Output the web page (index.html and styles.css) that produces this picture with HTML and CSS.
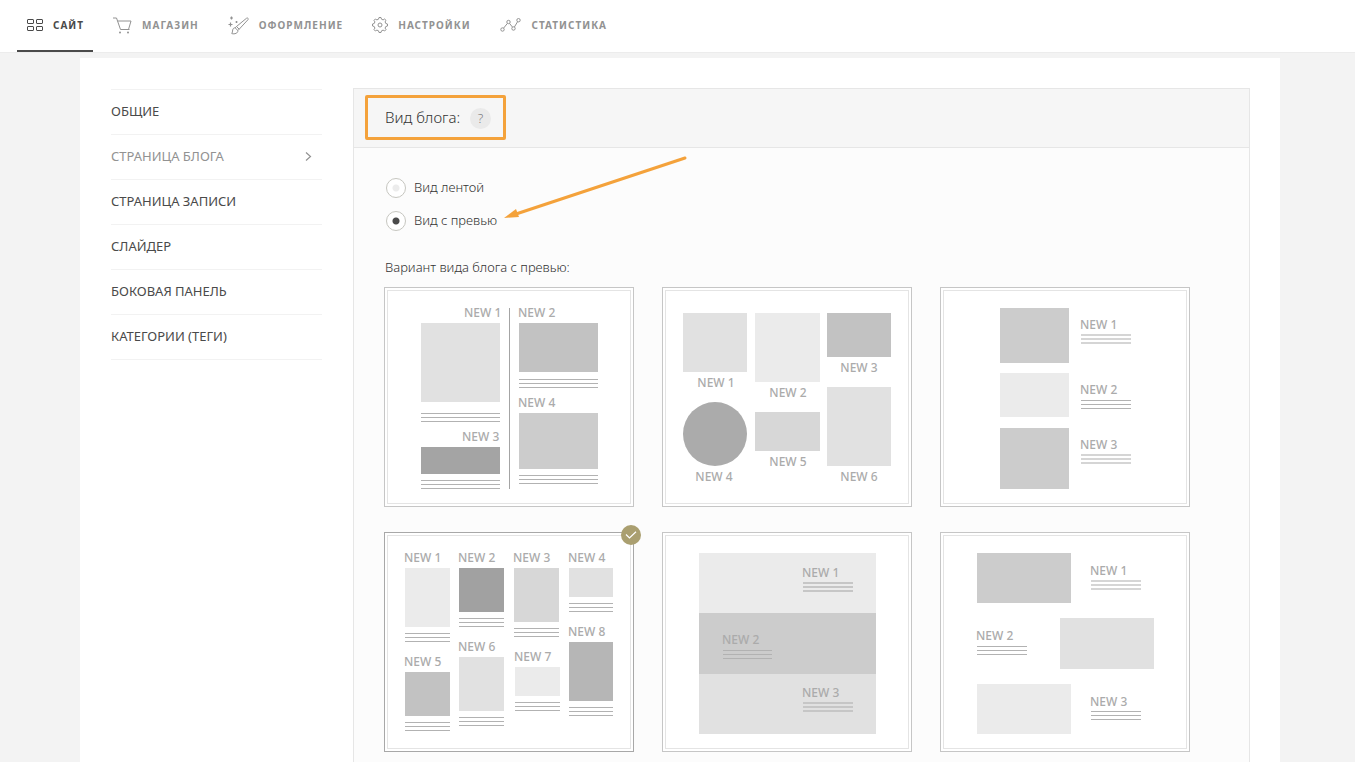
FILE: index.html
```html
<!DOCTYPE html>
<html lang="ru">
<head>
    <meta charset="UTF-8">
    <meta name="viewport" content="width=device-width, initial-scale=1.0">
    <title>Страница блога</title>
    <link rel="stylesheet" href="styles.css">
</head>
<body>
    <!-- top menu -->
    <nav class="navbar">
        <a href="#" class="active">
            <svg width="16" height="12" viewBox="0 0 16 12" fill="none" stroke="currentColor"><rect x="0.5" y="0.5" width="6" height="4" rx="0.5"/><rect x="9.5" y="0.5" width="6" height="4" rx="0.5"/><rect x="0.5" y="7.5" width="6" height="4" rx="0.5"/><rect x="9.5" y="7.5" width="6" height="4" rx="0.5"/></svg>
            Сайт
        </a>
        <a href="#">
            <svg width="19" height="17" viewBox="0 0 19 17" fill="none" stroke="currentColor"><path d="M0 1h3.500l4 11.500h9M4.500 4h13.500l-2.500 8.500"/><circle cx="7" cy="15.500" r="1" fill="currentColor" stroke="none"/><circle cx="15" cy="15.500" r="1" fill="currentColor" stroke="none"/></svg>
            Магазин
        </a>
        <a href="#">
            <svg width="21" height="19" viewBox="0 0 21 19" fill="none" stroke="currentColor"><path d="M20 2.300c-.6-.6-1.300-.2-1.800.2L8.500 10.500l2.700 2.700L19.700 4c.5-.5.800-1.200.3-1.700zM8.500 10.500l-1.400 1.300 2.800 2.700 1.300-1.300M7.100 11.800c-1.300 0-2.200.8-2.400 2.200-.2 1.400-.3 2.600-.9 3.600 2.700.8 6.400-.4 6.100-3.100"/><path d="M3.500.5v3M2 2h3M2.500 6.500v4M.5 8.500h4M8.500 5v2M7.500 6h2" stroke-width="1.200"/></svg>
            Оформление
        </a>
        <a href="#">
            <svg width="16" height="16" viewBox="0 0 16 16" fill="none" stroke="currentColor" stroke-linejoin="round"><path d="M7 .5L9 .5 9.500 2.200 11.100 2.900 12.600 2 14 3.400 13.100 4.900 13.800 6.500 15.500 7 15.500 9 13.800 9.500 13.100 11.100 14 12.600 12.600 14 11.100 13.100 9.500 13.800 9 15.500 7 15.500 6.500 13.800 4.900 13.100 3.400 14 2 12.600 2.900 11.100 2.200 9.500 .5 9 .5 7 2.200 6.500 2.900 4.900 2 3.400 3.400 2 4.900 2.900 6.500 2.200z"/><circle cx="8" cy="8" r="2"/></svg>
            Настройки
        </a>
        <a href="#">
            <svg width="22" height="14" viewBox="0 0 22 14" fill="none" stroke="currentColor"><circle cx="2.500" cy="11.500" r="1.700"/><circle cx="8.500" cy="4" r="1.700"/><circle cx="13.500" cy="10.500" r="1.700"/><circle cx="18.500" cy="2.200" r="1.700"/><path d="M3.600 10.100l3.800-4.700M9.500 5.400l3 3.700M14.400 9l3.200-5.300"/></svg>
            Статистика
        </a>
    </nav>

    <div class="container">
        <!-- side menu -->
        <ul class="sidebar">
            <li><a href="#">Общие</a></li>
            <li><a href="#" class="current">Страница блога
                <svg width="7" height="9" viewBox="0 0 7 9" fill="none" stroke="currentColor" stroke-width="1.200"><path d="M1 .5l4.500 4L1 8.500"/></svg>
            </a></li>
            <li><a href="#">Страница записи</a></li>
            <li><a href="#">Слайдер</a></li>
            <li><a href="#">Боковая панель</a></li>
            <li><a href="#">Категории (теги)</a></li>
        </ul>

        <form class="panel">
            <div class="panel-header">
                <div class="panel-title">
                    <h2>Вид блога:</h2>
                    <button type="button" class="help">?</button>
                    <span class="highlight"></span>
                </div>
            </div>

            <div class="panel-body">
                <label class="radio"><input type="radio" name="view" value="feed"><span>Вид лентой</span></label>
                <label class="radio"><input type="radio" name="view" value="preview" checked><span>Вид с превью</span>
                    <svg class="arrow" width="184" height="66" viewBox="0 0 184 66"><path d="M181 3L12 59" stroke="#f4a23b" stroke-width="3" stroke-linecap="round"/><path d="M0 63l12-9 3 8z" fill="#f4a23b"/></svg>
                </label>

                <p class="caption">Вариант вида блога с превью:</p>

                <div class="thumbs">
                    <label class="thumb">
                        <input type="radio" name="variant" value="1" aria-label="Вариант 1">
                        <svg viewBox="4 4 242 212">
                            <text x="80" y="30">NEW 1</text>
                            <rect x="37" y="36" width="79" height="79" fill="#e1e1e1"/>
                            <path class="lines" d="M37 126.500h79M37 130.500h79M37 134.500h79"/>
                            <text x="78" y="154">NEW 3</text>
                            <rect x="37" y="160" width="79" height="27" fill="#a4a4a4"/>
                            <path class="lines" d="M37 193.500h79M37 197.500h79M37 201.500h79"/>
                            <path d="M125.500 21v181" stroke="#a4a4a4"/>
                            <text x="134" y="30">NEW 2</text>
                            <rect x="135" y="36" width="79" height="49" fill="#c2c2c2"/>
                            <path class="lines" d="M135 92.500h79M135 96.500h79M135 100.500h79"/>
                            <text x="134" y="120">NEW 4</text>
                            <rect x="135" y="126" width="79" height="56" fill="#ccc"/>
                            <path class="lines" d="M135 188.500h79M135 192.500h79M135 196.500h79"/>
                        </svg>
                    </label>

                    <label class="thumb">
                        <input type="radio" name="variant" value="2" aria-label="Вариант 2">
                        <svg viewBox="4 4 242 212" text-anchor="middle">
                            <rect x="21" y="26" width="64" height="59" fill="#e1e1e1"/>
                            <text x="54" y="100">NEW 1</text>
                            <rect x="93" y="26" width="65" height="69" fill="#ebebeb"/>
                            <text x="126" y="110">NEW 2</text>
                            <rect x="165" y="26" width="64" height="44" fill="#c2c2c2"/>
                            <text x="197" y="85">NEW 3</text>
                            <circle cx="53" cy="147" r="32" fill="#ababab"/>
                            <text x="52" y="194">NEW 4</text>
                            <rect x="93" y="125" width="65" height="39" fill="#d7d7d7"/>
                            <text x="126" y="179">NEW 5</text>
                            <rect x="165" y="100" width="64" height="79" fill="#e1e1e1"/>
                            <text x="197" y="194">NEW 6</text>
                        </svg>
                    </label>

                    <label class="thumb">
                        <input type="radio" name="variant" value="3" aria-label="Вариант 3">
                        <svg viewBox="4 4 242 212">
                            <rect x="60" y="21" width="69" height="55" fill="#ccc"/>
                            <text x="140" y="42">NEW 1</text>
                            <path class="lines wide" d="M141 48h50M141 52h50M141 56h50"/>
                            <rect x="60" y="86" width="69" height="44" fill="#ebebeb"/>
                            <text x="140" y="107">NEW 2</text>
                            <path class="lines" d="M141 113.500h50M141 117.500h50M141 121.500h50"/>
                            <rect x="60" y="141" width="69" height="61" fill="#ccc"/>
                            <text x="140" y="162">NEW 3</text>
                            <path class="lines wide" d="M141 168h50M141 172h50M141 176h50"/>
                        </svg>
                    </label>

                    <label class="thumb">
                        <input type="radio" name="variant" value="4" aria-label="Вариант 4" checked>
                        <svg viewBox="4 4 242 212">
                            <text x="20" y="30">NEW 1</text>
                            <rect x="21" y="36" width="45" height="59" fill="#ebebeb"/>
                            <path class="lines" d="M21 101.500h45M21 105.500h45M21 109.500h45"/>
                            <text x="20" y="134">NEW 5</text>
                            <rect x="21" y="140" width="45" height="44" fill="#c2c2c2"/>
                            <path class="lines" d="M21 190.500h45M21 194.500h45M21 198.500h45"/>
                            <text x="74" y="30">NEW 2</text>
                            <rect x="75" y="36" width="45" height="44" fill="#a1a1a1"/>
                            <path class="lines" d="M75 86.500h45M75 90.500h45M75 94.500h45"/>
                            <text x="74" y="119">NEW 6</text>
                            <rect x="75" y="125" width="45" height="54" fill="#e1e1e1"/>
                            <path class="lines" d="M75 185.500h45M75 189.500h45M75 193.500h45"/>
                            <text x="129" y="30">NEW 3</text>
                            <rect x="130" y="36" width="45" height="54" fill="#d7d7d7"/>
                            <path class="lines" d="M130 96.500h45M130 100.500h45M130 104.500h45"/>
                            <text x="130" y="129">NEW 7</text>
                            <rect x="131" y="135" width="45" height="29" fill="#ebebeb"/>
                            <path class="lines" d="M131 170.500h45M131 174.500h45M131 178.500h45"/>
                            <text x="184" y="30">NEW 4</text>
                            <rect x="185" y="36" width="44" height="29" fill="#e1e1e1"/>
                            <path class="lines" d="M185 71.500h44M185 75.500h44M185 79.500h44"/>
                            <text x="184" y="104">NEW 8</text>
                            <rect x="185" y="110" width="44" height="59" fill="#b6b6b6"/>
                            <path class="lines" d="M185 175.500h44M185 179.500h44M185 183.500h44"/>
                        </svg>
                        <span class="check">
                            <svg width="12" height="8" viewBox="0 0 12 8" fill="none" stroke="#fff" stroke-width="1.200"><path d="M1 3.500l3.500 3.500L11 .8"/></svg>
                        </span>
                    </label>

                    <label class="thumb">
                        <input type="radio" name="variant" value="5" aria-label="Вариант 5">
                        <svg viewBox="4 4 242 212">
                            <rect x="37" y="21" width="177" height="60" fill="#ebebeb"/>
                            <rect x="37" y="81" width="177" height="61" fill="#ccc"/>
                            <rect x="37" y="142" width="177" height="60" fill="#e1e1e1"/>
                            <text x="140" y="45">NEW 1</text>
                            <path class="lines wide dark" d="M141 51h50M141 55h50M141 59h50"/>
                            <text x="60" y="112">NEW 2</text>
                            <path class="lines" d="M61 118.500h49M61 122.500h49M61 126.500h49"/>
                            <text x="140" y="165">NEW 3</text>
                            <path class="lines wide dark" d="M141 171h50M141 175h50M141 179h50"/>
                        </svg>
                    </label>

                    <label class="thumb">
                        <input type="radio" name="variant" value="6" aria-label="Вариант 6">
                        <svg viewBox="4 4 242 212">
                            <rect x="37" y="21" width="94" height="50" fill="#ccc"/>
                            <text x="150" y="43">NEW 1</text>
                            <path class="lines wide" d="M151 49h50M151 53h50M151 57h50"/>
                            <rect x="120" y="86" width="94" height="51" fill="#e1e1e1"/>
                            <text x="36" y="108">NEW 2</text>
                            <path class="lines" d="M37 114.500h50M37 118.500h50M37 122.500h50"/>
                            <rect x="37" y="152" width="94" height="50" fill="#ebebeb"/>
                            <text x="150" y="174">NEW 3</text>
                            <path class="lines" d="M151 179.500h50M151 183.500h50M151 187.500h50"/>
                        </svg>
                    </label>
                </div>
            </div>
        </form>
    </div>
</body>
</html>
```
FILE: styles.css
```css
* {
    box-sizing: border-box;
}
body {
    font-family: "Noto Sans", "Open Sans", sans-serif;
    font-size: 13px;
    font-weight: 300;
    color: #333;
    background: #f3f3f3;
    margin: 0;
    min-height: 100vh;
    display: flex;
    flex-direction: column;
}

/* top menu */
.navbar {
    display: flex;
    gap: 10px;
    padding: 0 17px;
    background: white;
    border-bottom: 1px solid #ececec;
}
.navbar a {
    display: flex;
    align-items: center;
    gap: 10px;
    height: 52px;
    padding: 0 9px 0 10px;
    border-bottom: 2px solid transparent;
    color: #929292;
    font-size: 10px;
    font-weight: bold;
    letter-spacing: 1px;
    text-transform: uppercase;
    text-decoration: none;
}
.navbar a.active {
    color: #4a4a4a;
    border-color: #4a4a4a;
}

.container {
    flex: 1;
    display: flex;
    gap: 31px;
    margin: 5px 75px 0 80px;
    padding: 30px 30px 0 31px;
    background: white;
}

/* side menu */
.sidebar {
    flex: 0 0 211px;
    list-style: none;
    margin: 1px 0 0;
    padding: 0;
}
.sidebar li {
    border-top: 1px solid #f2f2f2;
}
.sidebar li:last-child {
    border-bottom: 1px solid #f2f2f2;
}
.sidebar a {
    display: flex;
    align-items: center;
    justify-content: space-between;
    height: 44px;
    padding: 0 10px 2px 0;
    color: #4a4a4a;
    font-weight: 400;
    text-transform: uppercase;
    text-decoration: none;
}
.sidebar a.current {
    color: #929292;
}

/* settings */
.panel {
    flex: 1;
    border: 1px solid #e6e6e6;
    border-bottom: none;
    background: #fcfcfc;
}
.panel-header {
    display: flex;
    align-items: center;
    height: 59px;
    padding: 0 31px;
    background: #f6f6f6;
    border-bottom: 1px solid #e6e6e6;
}
.panel-title {
    position: relative;
    display: flex;
    align-items: center;
    gap: 10px;
}
.panel-title h2 {
    margin: 0;
    padding-bottom: 2px;
    font-size: 15px;
    font-weight: 300;
}
.help {
    width: 21px;
    height: 21px;
    padding: 0;
    border: none;
    border-radius: 50%;
    background: #eaeaea;
    color: #7a7a7a;
    font: inherit;
    cursor: pointer;
}
.highlight {
    position: absolute;
    inset: -12px -15px -11px -20px;
    border: 3px solid #f4a23b;
    border-radius: 2px;
}
.panel-body {
    padding: 29px 30px 10px;
}
.radio {
    position: relative;
    display: flex;
    align-items: center;
    gap: 8px;
    width: fit-content;
    height: 22px;
    margin-bottom: 11px;
    padding-left: 2px;
}
.radio span {
    padding-bottom: 2px;
}
.radio input {
    appearance: none;
    width: 20px;
    height: 20px;
    margin: 0;
    border: 1px solid #c6c6c0;
    border-radius: 50%;
    background: white radial-gradient(circle, #ececec 3px, transparent 4px);
}
.radio input:checked {
    background: white radial-gradient(circle, #4a4a4a 3px, transparent 4px);
}
.arrow {
    position: absolute;
    left: calc(100% + 7px);
    bottom: 11px;
}
.caption {
    margin: 26px 0 11px;
    padding-left: 1px;
    line-height: 18px;
}

.thumbs {
    display: flex;
    flex-wrap: wrap;
    gap: 25px 28px;
}
.thumb {
    position: relative;
    width: 250px;
    height: 220px;
    padding: 2px;
    border: 1px solid #c6c6c6;
    background: white;
    cursor: pointer;
}
.thumb:has(input:checked) {
    border-color: #a8a8a8;
}
.thumb input {
    position: absolute;
    opacity: 0;
    margin: 0;
}
.thumb > svg {
    display: block;
    width: 100%;
    height: 100%;
    border: 1px solid #e4e4e4;
}
.thumb text {
    font-size: 12px;
    font-weight: 500;
    fill: #ababab;
}
.lines {
    stroke: #b2b2b2;
}
.wide {
    stroke: #d5d5d5;
    stroke-width: 2;
}
.dark {
    stroke: #c6c6c6;
}
.check {
    position: absolute;
    top: -8px;
    right: -8px;
    display: flex;
    align-items: center;
    justify-content: center;
    width: 20px;
    height: 20px;
    border-radius: 50%;
    background: #aa9f70;
}
```
